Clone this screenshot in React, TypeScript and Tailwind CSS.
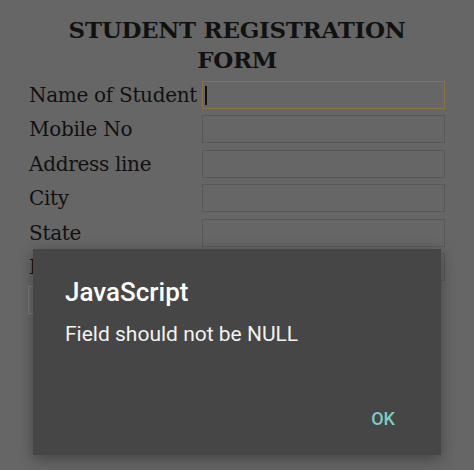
import React from 'react';

const FIELDS = ['Name of Student', 'Mobile No', 'Address line', 'City', 'State', 'Pincode'];

function RegistrationForm() {
  return (
    <div className="px-[29px] pt-[15px] font-['DejaVu_Serif',serif] text-[#111]">
      <h1 className="text-center text-[23px] leading-[30px] font-bold tracking-[-0.3px]">
        STUDENT REGISTRATION
        <br />
        FORM
      </h1>
      <div className="mt-[6px] flex flex-col gap-[6.4px]">
        {FIELDS.map((label, i) => (
          <div key={label} className="flex items-center">
            <label className="w-[173px] shrink-0 text-[20px] leading-[28px] tracking-[-0.3px]">{label}</label>
            <div
              className={`h-[28px] flex-1 border-[1.5px] flex items-center pl-[2px] ${
                i === 0 ? 'border-[#8a7444]' : 'border-[#585858]'
              }`}
            >
              {i === 0 && <span className="h-[19px] w-[2px] bg-[#111]" />}
            </div>
          </div>
        ))}
      </div>
      <button className="mt-[5px] -ml-[1px] h-[28px] px-4 border border-[#7c7c7c] bg-[#6a6a6a] text-[16px]">
        Submit
      </button>
    </div>
  );
}

function AlertDialog() {
  return (
    <div className="absolute left-[33px] top-[249px] w-[408px] h-[206px] bg-[#464646] shadow-[0_4px_14px_rgba(0,0,0,0.35)] font-['Roboto',sans-serif] flex flex-col">
      <div className="px-[32px] pt-[28px]">
        <div className="text-[26px] leading-[30px] font-medium text-white">JavaScript</div>
        <div className="mt-[14px] text-[21px] leading-[26px] text-[#f2f2f2]">Field should not be NULL</div>
      </div>
      <div className="mt-auto flex justify-end pr-[46px] pb-[24px]">
        <button className="text-[18px] leading-[24px] font-medium text-[#80cbc0]">OK</button>
      </div>
    </div>
  );
}

export default function App() {
  return (
    <div className="relative w-[474px] h-[470px] overflow-hidden bg-[#666666]">
      <RegistrationForm />
      <AlertDialog />
    </div>
  );
}
